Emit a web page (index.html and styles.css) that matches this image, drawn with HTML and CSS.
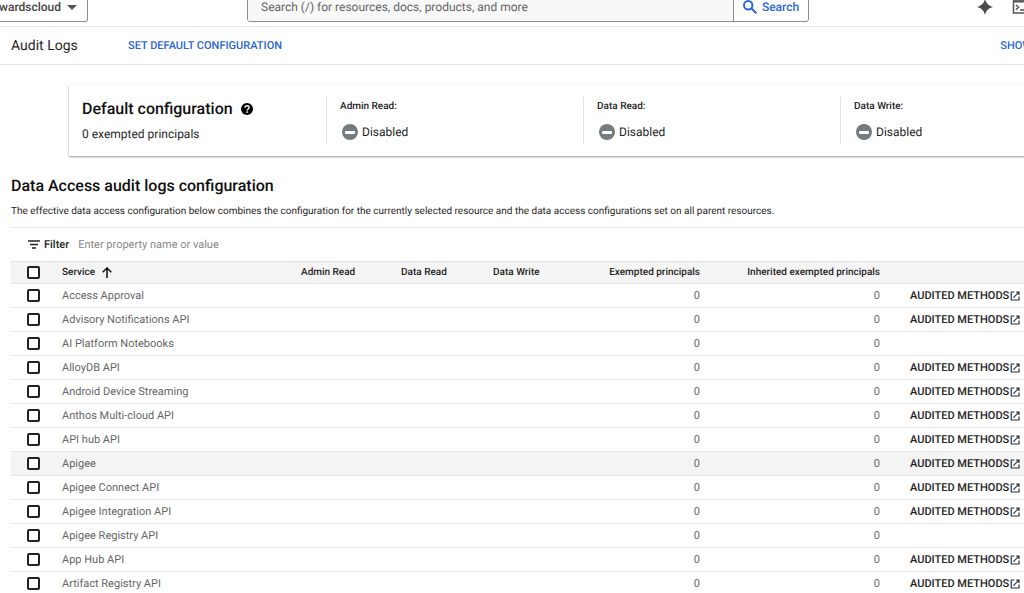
FILE: index.html
```html
<!DOCTYPE html>
<html lang="en">
<head>
  <meta charset="UTF-8">
  <title>Audit Logs</title>
  <link rel="stylesheet" href="styles.css">
</head>
<body>
  <!-- Shared icons -->
  <svg class="sprite" aria-hidden="true">
    <symbol id="icon-disabled" viewBox="0 0 16 16">
      <circle cx="8" cy="8" r="8" fill="#757c80"/>
      <rect x="3" y="7" width="10" height="3" rx="1" fill="#fff"/>
    </symbol>
    <symbol id="icon-external" viewBox="0 0 10 10">
      <path d="M4.5 1H1.2v8H9V5.6M6 1h3v3M8.8 1.2 3.4 6.6" fill="none" stroke="#333" stroke-width="1.2"/>
    </symbol>
  </svg>

  <header class="topbar">
    <button class="project-picker">wardscloud
      <svg width="10" height="5" viewBox="0 0 10 5"><path d="M0 0h10L5 5z" fill="#555"/></svg>
    </button>
    <form class="search">
      <input type="text" aria-label="Search" placeholder="Search (/) for resources, docs, products, and more">
      <button type="button">
        <svg width="14" height="14" viewBox="0 0 14 14"><g fill="none" stroke="#2a66d4" stroke-width="2"><circle cx="5.2" cy="5.2" r="4.2"/><path d="M8.3 8.3l5 5"/></g></svg>
        Search
      </button>
    </form>
    <div class="tools">
      <button aria-label="Gemini">
        <svg width="16" height="16" viewBox="0 0 16 16"><path d="M8 0C8.9 4.200 11.800 7.100 16 8 11.800 8.900 8.900 11.800 8 16 7.100 11.800 4.200 8.900 0 8 4.200 7.100 7.100 4.200 8 0z" fill="#4a4a4a"/></svg>
      </button>
      <button aria-label="Cloud Shell">
        <svg width="16" height="14" viewBox="0 0 16 14"><path d="M1.500 1h13v12h-13zM4 5l2.500 2.300L4 9.600M8 10h4" fill="none" stroke="#555" stroke-width="1.500"/><path d="M1 .5h14v2H1z" fill="#555"/></svg>
      </button>
    </div>
  </header>

  <div class="pagebar">
    <h1>Audit Logs</h1>
    <a href="#">SET DEFAULT CONFIGURATION</a>
    <a href="#" class="show-panel">SHOW</a>
  </div>

  <main>
    <section class="default-config">
      <div class="config-title">
        <h2>Default configuration
          <svg width="12" height="12" viewBox="0 0 12 12"><circle cx="6" cy="6" r="6"/><path d="M4 4.700c0-2.700 4.100-2.600 4.100-.2C8.100 6 6.200 6 6.200 7.500" fill="none" stroke="#fff" stroke-width="1.400"/><rect x="5.400" y="8.300" width="1.500" height="1.500" fill="#fff"/></svg>
        </h2>
        <p>0 exempted principals</p>
      </div>
      <div class="config-item">
        <h3>Admin Read:</h3>
        <p><svg><use href="#icon-disabled"/></svg>Disabled</p>
      </div>
      <div class="config-item">
        <h3>Data Read:</h3>
        <p><svg><use href="#icon-disabled"/></svg>Disabled</p>
      </div>
      <div class="config-item">
        <h3>Data Write:</h3>
        <p><svg><use href="#icon-disabled"/></svg>Disabled</p>
      </div>
    </section>

    <section class="data-access">
      <h2>Data Access audit logs configuration</h2>
      <p>The effective data access configuration below combines the configuration for the currently selected resource and the data access configurations set on all parent resources.</p>

      <div class="filter">
        <svg width="12" height="9" viewBox="0 0 12 9"><path d="M0 1h12M2 4.500h8M4 8h4" fill="none" stroke="#222" stroke-width="1.500"/></svg>
        <label for="filter">Filter</label>
        <input type="text" id="filter" placeholder="Enter property name or value">
      </div>

      <table>
        <colgroup>
          <col class="col-check">
          <col class="col-service">
          <col class="col-admin">
          <col class="col-read">
          <col class="col-write">
          <col class="col-exempted">
          <col class="col-inherited">
          <col>
        </colgroup>
        <thead>
          <tr>
            <th><input type="checkbox" aria-label="Select all"></th>
            <th>Service
              <svg class="sort" width="10" height="11" viewBox="0 0 10 11"><path d="M5 11V1M.7 5.300 5 1l4.300 4.300" fill="none" stroke="#111" stroke-width="1.500"/></svg>
            </th>
            <th>Admin Read</th>
            <th>Data Read</th>
            <th>Data Write</th>
            <th class="num">Exempted principals</th>
            <th class="num">Inherited exempted principals</th>
            <th></th>
          </tr>
        </thead>
        <tbody>
          <tr>
            <td><input type="checkbox" aria-label="Access Approval"></td>
            <td>Access Approval</td>
            <td></td><td></td><td></td>
            <td class="num">0</td>
            <td class="num">0</td>
            <td class="action"><a href="#">AUDITED METHODS<svg><use href="#icon-external"/></svg></a></td>
          </tr>
          <tr>
            <td><input type="checkbox" aria-label="Advisory Notifications API"></td>
            <td>Advisory Notifications API</td>
            <td></td><td></td><td></td>
            <td class="num">0</td>
            <td class="num">0</td>
            <td class="action"><a href="#">AUDITED METHODS<svg><use href="#icon-external"/></svg></a></td>
          </tr>
          <tr>
            <td><input type="checkbox" aria-label="AI Platform Notebooks"></td>
            <td>AI Platform Notebooks</td>
            <td></td><td></td><td></td>
            <td class="num">0</td>
            <td class="num">0</td>
            <td></td>
          </tr>
          <tr>
            <td><input type="checkbox" aria-label="AlloyDB API"></td>
            <td>AlloyDB API</td>
            <td></td><td></td><td></td>
            <td class="num">0</td>
            <td class="num">0</td>
            <td class="action"><a href="#">AUDITED METHODS<svg><use href="#icon-external"/></svg></a></td>
          </tr>
          <tr>
            <td><input type="checkbox" aria-label="Android Device Streaming"></td>
            <td>Android Device Streaming</td>
            <td></td><td></td><td></td>
            <td class="num">0</td>
            <td class="num">0</td>
            <td class="action"><a href="#">AUDITED METHODS<svg><use href="#icon-external"/></svg></a></td>
          </tr>
          <tr>
            <td><input type="checkbox" aria-label="Anthos Multi-cloud API"></td>
            <td>Anthos Multi-cloud API</td>
            <td></td><td></td><td></td>
            <td class="num">0</td>
            <td class="num">0</td>
            <td class="action"><a href="#">AUDITED METHODS<svg><use href="#icon-external"/></svg></a></td>
          </tr>
          <tr>
            <td><input type="checkbox" aria-label="API hub API"></td>
            <td>API hub API</td>
            <td></td><td></td><td></td>
            <td class="num">0</td>
            <td class="num">0</td>
            <td class="action"><a href="#">AUDITED METHODS<svg><use href="#icon-external"/></svg></a></td>
          </tr>
          <tr class="active">
            <td><input type="checkbox" aria-label="Apigee"></td>
            <td>Apigee</td>
            <td></td><td></td><td></td>
            <td class="num">0</td>
            <td class="num">0</td>
            <td class="action"><a href="#">AUDITED METHODS<svg><use href="#icon-external"/></svg></a></td>
          </tr>
          <tr>
            <td><input type="checkbox" aria-label="Apigee Connect API"></td>
            <td>Apigee Connect API</td>
            <td></td><td></td><td></td>
            <td class="num">0</td>
            <td class="num">0</td>
            <td class="action"><a href="#">AUDITED METHODS<svg><use href="#icon-external"/></svg></a></td>
          </tr>
          <tr>
            <td><input type="checkbox" aria-label="Apigee Integration API"></td>
            <td>Apigee Integration API</td>
            <td></td><td></td><td></td>
            <td class="num">0</td>
            <td class="num">0</td>
            <td class="action"><a href="#">AUDITED METHODS<svg><use href="#icon-external"/></svg></a></td>
          </tr>
          <tr>
            <td><input type="checkbox" aria-label="Apigee Registry API"></td>
            <td>Apigee Registry API</td>
            <td></td><td></td><td></td>
            <td class="num">0</td>
            <td class="num">0</td>
            <td></td>
          </tr>
          <tr>
            <td><input type="checkbox" aria-label="App Hub API"></td>
            <td>App Hub API</td>
            <td></td><td></td><td></td>
            <td class="num">0</td>
            <td class="num">0</td>
            <td class="action"><a href="#">AUDITED METHODS<svg><use href="#icon-external"/></svg></a></td>
          </tr>
          <tr>
            <td><input type="checkbox" aria-label="Artifact Registry API"></td>
            <td>Artifact Registry API</td>
            <td></td><td></td><td></td>
            <td class="num">0</td>
            <td class="num">0</td>
            <td class="action"><a href="#">AUDITED METHODS<svg><use href="#icon-external"/></svg></a></td>
          </tr>
        </tbody>
      </table>
    </section>
  </main>
</body>
</html>
```
FILE: styles.css
```css
* {
  box-sizing: border-box;
}
html {
  overflow: hidden;
}
body {
  margin: 0;
  font-family: Roboto, "Liberation Sans", sans-serif;
  font-size: 11px;
  color: #1f1f1f;
  background: #fff;
  text-rendering: geometricPrecision;
}
h1, h2, h3, p {
  margin: 0;
}
button, input {
  font-family: inherit;
  text-rendering: inherit;
}
button {
  background: none;
  border: none;
  padding: 0;
}
a {
  text-decoration: none;
}
.sprite {
  display: none;
}

/* Top bar */
.topbar {
  display: flex;
  align-items: center;
  height: 39px;
  margin-top: -12px;
  border-bottom: 1px solid #e4e4e4;
}
.project-picker {
  display: flex;
  align-items: center;
  gap: 6px;
  height: 30px;
  width: 89px;
  margin-left: -1px;
  border: 1px solid #8c8c8c;
  border-left: none;
  border-radius: 0 3px 3px 0;
  font-size: 12px;
  font-weight: 500;
  color: #444;
}
.search {
  display: flex;
  flex: 0 1 562px;
  height: 30px;
  margin-left: 159px;
  border: 1px solid #8c8c8c;
  border-radius: 3px;
  overflow: hidden;
}
.search input {
  flex: 1;
  border: none;
  padding: 0 13px;
  background: #f8f8f8;
  font-size: 12px;
}
.search input::placeholder {
  color: #666;
}
.search button {
  display: flex;
  align-items: center;
  justify-content: center;
  gap: 5px;
  width: 75px;
  border-left: 1px solid #8c8c8c;
  font-size: 12px;
  font-weight: 500;
  color: #2a66d4;
}
.tools {
  display: flex;
  gap: 19px;
  margin-left: auto;
  margin-right: -4px;
}
.tools button {
  display: flex;
  align-items: center;
}

/* Page title bar */
.pagebar {
  display: flex;
  align-items: center;
  height: 38px;
  padding-left: 11px;
  border-bottom: 1px solid #e4e4e4;
}
.pagebar h1 {
  width: 117px;
  font-size: 14px;
  font-weight: 400;
}
.pagebar a {
  font-size: 11px;
  font-weight: 500;
  color: #2a66d4;
}
.pagebar .show-panel {
  margin-left: auto;
  margin-right: -8px;
}

/* Default configuration card */
.default-config {
  display: grid;
  grid-template-columns: repeat(4, 257px);
  margin: 20px -16px 0 69px;
  padding: 12px 0;
  background: #fff;
  box-shadow: 0 1px 2px rgba(0, 0, 0, 0.4);
}
.config-title {
  padding-left: 13px;
}
.config-title h2 {
  display: flex;
  align-items: center;
  gap: 8px;
  font-size: 16px;
  line-height: 24px;
  font-weight: 500;
  color: #111;
}
.config-title p {
  margin-top: 3px;
  font-size: 12px;
  line-height: 20px;
}
.config-item {
  padding-left: 13px;
  border-left: 1px solid #e0e0e0;
}
.config-item h3 {
  font-size: 10px;
  line-height: 20px;
  font-weight: 500;
}
.config-item p {
  display: flex;
  align-items: center;
  gap: 4px;
  margin-top: 4px;
  padding-left: 2px;
  font-size: 12px;
  line-height: 22px;
}
.config-item svg {
  width: 16px;
  height: 16px;
}

/* Data access section */
.data-access {
  margin-left: 11px;
}
.data-access h2 {
  margin-top: 18px;
  font-size: 16px;
  line-height: 24px;
  font-weight: 500;
  color: #111;
}
.data-access p {
  margin-top: 5px;
  font-size: 10px;
  line-height: 18px;
}
.filter {
  display: flex;
  align-items: center;
  height: 34px;
  margin-top: 6px;
  padding-left: 17px;
  border-top: 1px solid #e4e4e4;
}
.filter label {
  margin-left: 4px;
  font-size: 11px;
  font-weight: 500;
}
.filter input {
  flex: 1;
  margin-left: 9px;
  padding: 0;
  border: none;
  font-size: 11px;
}
.filter input::placeholder {
  color: #888;
}

table {
  width: 100%;
  table-layout: fixed;
  border-collapse: separate;
  border-spacing: 0;
}
.col-check { width: 51px; }
.col-service { width: 239px; }
.col-admin { width: 100px; }
.col-read { width: 92px; }
.col-write { width: 90px; }
.col-exempted { width: 117px; }
.col-inherited { width: 180px; }

th, td {
  height: 24px;
  padding: 0;
  border-bottom: 1px solid #e4e4e4;
  text-align: left;
  vertical-align: middle;
  white-space: nowrap;
}
th {
  height: 23px;
  border-top: 1px solid #e4e4e4;
  background: #f4f4f4;
  font-size: 10px;
  font-weight: 500;
}
td {
  font-size: 11px;
  color: #666;
}
.num {
  text-align: right;
}
.sort {
  margin-left: 4px;
  vertical-align: middle;
}
.active td {
  background: #f4f4f4;
}
.action {
  padding-left: 30px;
}
.action a {
  display: flex;
  align-items: center;
  gap: 1px;
  font-weight: 500;
  color: #222;
}
.action svg {
  width: 10px;
  height: 10px;
}
input[type="checkbox"] {
  appearance: none;
  display: block;
  width: 13px;
  height: 13px;
  margin: 0 0 0 16px;
  border: 2px solid #222;
  border-radius: 2px;
  background: #fff;
}
```
